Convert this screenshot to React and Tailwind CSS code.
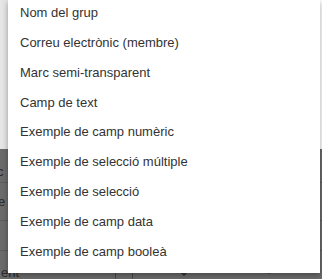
import React from "react";

const items = [
  "Nom del grup",
  "Correu electrònic (membre)",
  "Marc semi-transparent",
  "Camp de text",
  "Exemple de camp numèric",
  "Exemple de selecció múltiple",
  "Exemple de selecció",
  "Exemple de camp data",
  "Exemple de camp booleà",
];

export default function App() {
  return (
    <div
      className="relative w-[322px] h-[279px] overflow-hidden bg-white"
      style={{ fontFamily: '"Liberation Sans", Arial, sans-serif' }}
    >
      {/* background page */}
      <div className="flex flex-col h-full">
        <div className="flex h-[152px]">
          <div className="w-[8px] bg-[#e6e6e6]" />
          <div className="flex-1 bg-white" />
        </div>
        <div className="flex-1 bg-[#6b6b6b] flex flex-col text-[13px] text-[#2a2a2a]">
          <div className="h-[34px] border-b border-[#5c5c5c] flex items-end pb-[1px] -ml-[3px]">c</div>
          <div className="h-[38px] border-b border-[#5c5c5c] flex items-center -ml-[2px]">e</div>
          <div className="h-[30px] border-b border-[#5c5c5c]" />
          <div className="h-[18px]" />
          <div className="relative flex-1 flex items-start">
            <span className="-mt-[3px] ml-[1px] leading-none">ent</span>
            <div className="absolute left-[115px] top-0 bottom-0 w-px bg-[#4a4a4a]" />
            <div className="absolute left-[132px] top-0 bottom-0 w-px bg-[#4a4a4a]" />
            <svg className="absolute left-[180px] -top-[2px]" width="12" height="10" viewBox="0 0 12 10">
              <path d="M1 5 L4 8 L11 1" stroke="#2b2b2b" strokeWidth="1.5" fill="none" />
            </svg>
            <svg className="absolute left-[266px] -top-[4px]" width="10" height="10" viewBox="0 0 10 10">
              <path d="M2 8 L8 2" stroke="#1f2a5a" strokeWidth="3" fill="none" />
            </svg>
          </div>
        </div>
      </div>

      {/* dropdown menu */}
      <div className="absolute left-[8px] top-0 w-[312px] h-[273px] bg-white shadow-[0_2px_6px_rgba(0,0,0,0.35)]">
        <ul className="flex flex-col -mt-[2px]">
          {items.map((t) => (
            <li
              key={t}
              className="h-[29.8px] flex items-center pl-[12px] text-[13px] text-[#333333] whitespace-nowrap"
            >
              {t}
            </li>
          ))}
        </ul>
      </div>
    </div>
  );
}
